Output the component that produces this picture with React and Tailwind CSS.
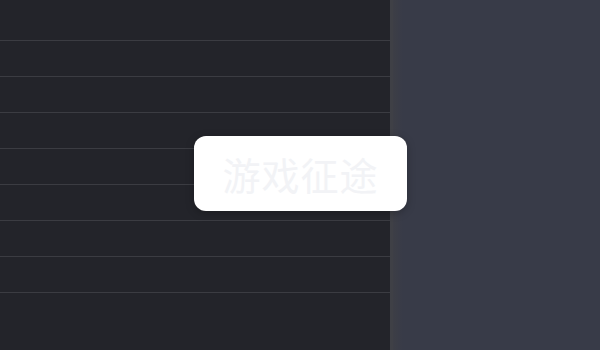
import React from "react";

export default function App() {
  const rows = Array.from({ length: 8 });
  return (
    <div className="relative flex h-[350px] w-[600px] overflow-hidden bg-[#383b48]" style={{ fontFamily: '"Noto Sans CJK SC", "Noto Sans", sans-serif' }}>
      <div className="flex h-full w-[390px] flex-col bg-[#23242a]">
        <div className="h-[41px] shrink-0 border-b border-[#3b3c42]" />
        {rows.slice(1).map((_, i) => (
          <div key={i} className="h-[36px] shrink-0 border-b border-[#3b3c42]" />
        ))}
      </div>
      <div className="h-full w-[3px] bg-[#3f4046]" />
      <div className="h-full w-[10px] bg-gradient-to-r from-[#3d3e46] to-[#383b48]" />
      <div className="absolute left-[194px] top-[136px] flex h-[75px] w-[213px] items-center justify-center rounded-[12px] bg-white shadow-[0_2px_8px_rgba(0,0,0,0.25)]">
        <span className="text-[38px] leading-none tracking-[1px] text-[#f2f3f6]">游戏征途</span>
      </div>
    </div>
  );
}
